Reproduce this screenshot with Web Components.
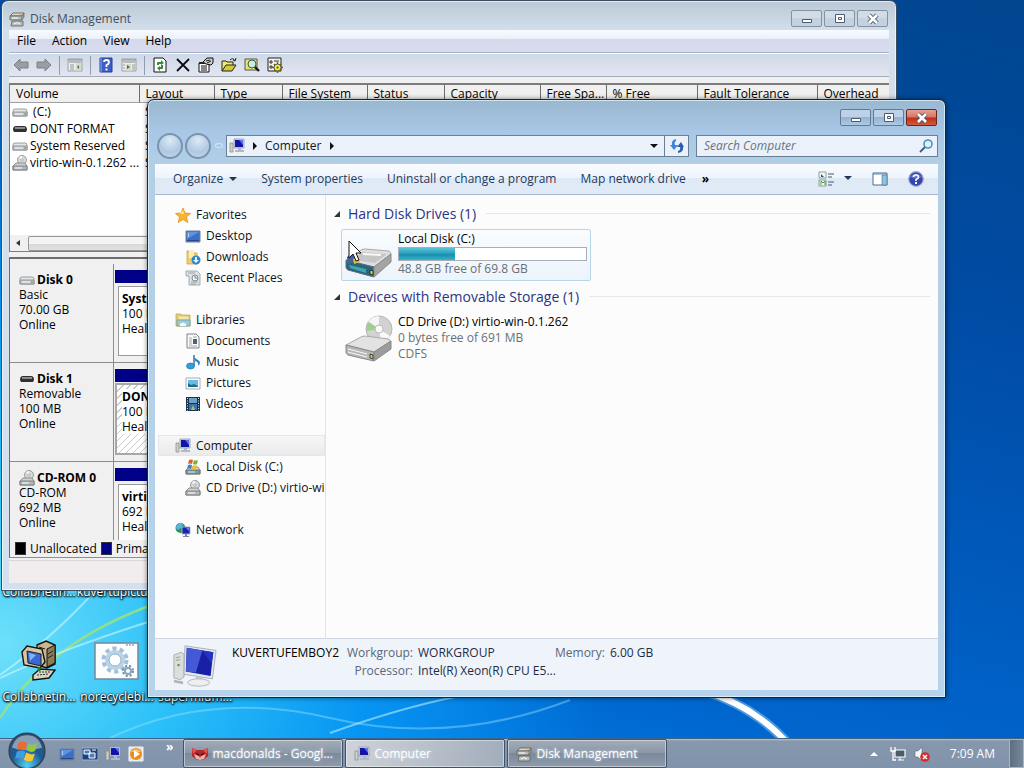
<!DOCTYPE html>
<html lang="en">
<head>
<meta charset="utf-8">
<meta name="viewport" content="width=device-width, initial-scale=1">
<title>Desktop</title>
<style>
    html, body {
        margin: 0;
        height: 100%;
        overflow: hidden;
    }
    body {
        font-family: "Open Sans", "Noto Sans", sans-serif;
        font-size: 12px;
        line-height: 16px;
        color: #101418;
    }
</style>
</head>
<body>
<win-desktop>
    <desktop-icon label="Collabnetin..." icon="oldpc"></desktop-icon>
    <desktop-icon label="kuvertupictu..." icon="gears"></desktop-icon>
    <desktop-icon label=""></desktop-icon>
    <desktop-icon label="Collabnetin..." icon="oldpc"></desktop-icon>
    <desktop-icon label="norecyclebi..." icon="gears"></desktop-icon>
    <desktop-icon label="supermium..." icon="gears"></desktop-icon>

    <win-window slot="windows" id="disks" caption="Disk Management" icon="disks">
        <disk-management></disk-management>
    </win-window>
    <win-window slot="windows" id="explorer" active>
        <explorer-view></explorer-view>
    </win-window>

    <task-bar slot="taskbar">
        <task-button icon="fox" label="macdonalds - Googl..."></task-button>
        <task-button icon="computer" label="Computer" active></task-button>
        <task-button icon="disks" label="Disk Management"></task-button>
    </task-bar>
</win-desktop>

<script>
const icons = {
    disks: `
        <path d="M1 5l3-3h11l-2 3z" fill="#d9d9d2" stroke="#555" stroke-width=".8"/>
        <path d="M1 5h12v4H1zM3 10h11v5H2z" fill="#b9bcb8" stroke="#5d6161" stroke-width=".8"/>
        <path d="M13 5l2-3v4l-2 3" fill="#999" stroke="#666" stroke-width=".7"/>
        <path d="M3 7h6M5 13q3-3 6 0" stroke="#fff" fill="none"/><path d="M10 3h4" stroke="#d6a94c"/>`,
    computer: `
        <path d="M1 5h3v9H1z" fill="#cfd0c8" stroke="#888" stroke-width=".7"/>
        <path d="M5 1h10v9H5z" fill="#cfd6e4" stroke="#8f9bb2" stroke-width=".8"/>
        <path d="M6 2h8v7H6z" fill="#1414a4"/><path d="M10 2h4v5z" fill="#5b73e6"/>
        <path d="M9 10h3v2H9zM6 12h9v2H6z" fill="#b1b8c5"/>`,
    drive: `
        <path d="M1 7q0-2 2-2h10q2 0 2 2v5H1z" fill="#e4e5e6" stroke="#85898c" stroke-width=".8"/>
        <path d="M1 8h14v4H1z" fill="#c3c6c8" stroke="#83878a" stroke-width=".8"/>
        <path d="M3 10h8" stroke="#fafafa"/><path d="M12 10h2" stroke="#5f9a4e"/>`,
    usb: `<path d="M1 9q0-4 3-4h8q3 0 3 4l-1 2H2z" fill="#303030"/><path d="M3 7h10" stroke="#8a8a8a" stroke-width="2"/>`,
    cd: `
        <circle cx="10" cy="5" r="4.5" fill="#d8dadb" stroke="#85898b" stroke-width=".8"/>
        <path d="M10 5 7 2l3-1z" fill="#fff"/><circle cx="10" cy="5" r="1.2" fill="#fff" stroke="#888" stroke-width=".6"/>
        <path d="M1 11l3-3h9l2 3v4H1z" fill="#cfd1d2" stroke="#77797b" stroke-width=".8"/>
        <path d="M1 11h14v4H1z" fill="#b4b7b9" stroke="#6f7375" stroke-width=".8"/><path d="M3 13h7" stroke="#fff"/>`,
    localdisk: `
        <path d="M1 11l3-3h9l2 3v4H1z" fill="#d3d5d6" stroke="#777b7e" stroke-width=".8"/>
        <path d="M1 11h14v4H1z" fill="#7f9a95" stroke="#5f6b6b" stroke-width=".8"/><path d="M3 13h7" stroke="#dce9e6"/>
        <path d="M4 1q2-1 4 0L7 5Q5 4 3 5z" fill="#dd5f2e"/><path d="M9 1q2 1 4 0l-1 4q-2 1-4 0z" fill="#77b338"/>
        <path d="M3 6q2-1 4 0L6 10q-2-1-4 0z" fill="#3f82c5"/><path d="M8 6q2 1 4 0l-1 4q-2 1-4 0z" fill="#f0bc2c"/>`,
    back: `<path d="M1 8l6-6v3h8v6H7v3z" fill="#9a9da1" stroke="#7d8186"/>`,
    forward: `<path d="M15 8L9 2v3H1v6h8v3z" fill="#9a9da1" stroke="#7d8186"/>`,
    tree: `<path d="M1 2h14v12H1z" fill="#e9eef0" stroke="#9aa0a6"/><path d="M1 3h14M2 5h12" stroke="#83898e"/><path d="M3 8h4M3 10h4M3 12h4" stroke="#999"/><path d="M9 6h5v8H9z" fill="#d0dacd"/><path d="M12 8v4L10 10z" fill="#4e704c"/>`,
    pane: `<path d="M1 2h14v12H1z" fill="#e9eef0" stroke="#9aa0a6"/><path d="M1 3h14M2 5h12" stroke="#83898e"/><path d="M11 8h3M11 10h3M11 12h3M2 8h2M2 11h2" stroke="#999"/><path d="M5 7h5v7H5z" fill="#d0dacd"/><path d="M6 8v4l3-2z" fill="#4e704c"/>`,
    book: `<path d="M2 1h12v14H2z" fill="#3d5fc9" stroke="#263f93"/><path d="M3 1v14" stroke="#93a7ea"/><path d="M6 5q0-2 2.5-2T11 5.5Q11 7 8.5 8v2" fill="none" stroke="#fff" stroke-width="1.8"/><path d="M7.5 11.5h2v2h-2z" fill="#fff"/>`,
    refresh: `<path d="M2 1h9l3 3v11H2z" fill="#fff" stroke="#111"/><path d="M5 8V6q0-1 1-1h3V3l3 3-3 2V7H7v1zM11 8v3q0 1-1 1H8v2l-3-3 3-2v1h1V8z" fill="#2d922e"/>`,
    cross: `<path d="M2 2l12 12M14 2L2 14" stroke="#0b0b18" stroke-width="1.8"/>`,
    properties: `<path d="M1 6h10v9H1z" fill="#fff" stroke="#111"/><path d="M3 9h6M3 11h6M3 13h6" stroke="#111"/><path d="M1 5h10v2H1z" fill="#222"/><path d="M5 5l4-4h6v5l-2 2-5-1z" fill="#ccc" stroke="#111"/><path d="M8 4l4-1M9 6l4-2" stroke="#222"/>`,
    open: `<path d="M1 14V4h4l1 1h6v3" fill="#f2e96c" stroke="#222"/><path d="M1 14l4-6h10l-4 6z" fill="#d2c93e" stroke="#222"/><path d="M9 3q3-3 5 1l-2-1M14 4l1-3" stroke="#222" fill="none"/>`,
    find: `<path d="M1 2h12v11H1z" fill="#e6e273" stroke="#555"/><circle cx="8" cy="7" r="4" fill="#c9ece1" stroke="#3f5d3f"/><path d="M11 10l4 4" stroke="#181818" stroke-width="2.4"/>`,
    settings: `<path d="M1 1h13v13H1z" fill="#f2f2ee" stroke="#222"/><path d="M3 4h2v2H3zM3 9h2v2H3z" stroke="#333" fill="none"/><path d="M7 4h5" stroke="#333"/><path d="M10.500 5v11M5 10.500h11M7 7l7 7M14 7l-7 7" stroke="#6d680c" stroke-width="1.500"/><circle cx="10.500" cy="10.500" r="3.500" fill="#f5ee3c" stroke="#555"/><circle cx="10.500" cy="10.500" r="1" fill="#333"/>`,
    star: `<path d="M8 1l2 5 5.5.5-4 3.5 1.300 5.500L8 12.500l-4.800 3L4.500 10l-4-3.500L6 6z" fill="#f9b52c" stroke="#d98a1a" stroke-width=".7"/><path d="M8 3l1 4H5z" fill="#ffe598"/>`,
    desktop: `<path d="M1 3h14v11H1z" fill="#3c6fc4" stroke="#6c7fa0"/><path d="M2 4h12L2 11z" fill="#5e94dd"/><path d="M2 12h12v1H2z" fill="#254787"/><path d="M3 6h1M3 8h1" stroke="#fff"/>`,
    downloads: `<path d="M2 2h6l1 2h3v11H2z" fill="#f0cf6c" stroke="#c39a3a" stroke-width=".7"/><path d="M4 1h5v8H4z" fill="#f9eebc"/><circle cx="11" cy="11" r="4.500" fill="#2e86ce"/><path d="M10 8h2v3h2l-3 3-3-3h2z" fill="#e5f5ff"/>`,
    recent: `<path d="M1 1h11l3 3v11H4V6H1z" fill="#dfe3e6" stroke="#90989e" stroke-width=".8"/><path d="M3 3h7M6 12h7M6 14h5" stroke="#9aa2a8"/><circle cx="10" cy="8" r="3" fill="#f4f8fa" stroke="#7a858d"/><path d="M10 6v2h2" stroke="#556" fill="none" stroke-width=".8"/>`,
    libraries: `<path d="M1 2h5l1 1h8v11H1z" fill="#e9cf78" stroke="#bf9f49" stroke-width=".7"/><path d="M3 4h11v4H3z" fill="#f4e7ab" stroke="#c8ad5f" stroke-width=".5"/><path d="M2 8h13v6H2z" fill="#9dcbd8" stroke="#5c98ac" stroke-width=".7"/><path d="M5 14v-2q3-3 6 0v2z" fill="#f6fbfb"/>`,
    documents: `<path d="M2 1h9l3 3v11H2z" fill="#fafafa" stroke="#6f767c" stroke-width=".9"/><path d="M4 5h3M4 7h3M4 9h3M4 11h3M4 13h8M8 4h4" stroke="#8d979e" stroke-width=".8"/><path d="M8 6h4v5H8z" fill="#52616d"/>`,
    music: `<path d="M9 1q0 3 4 5t0 6q1-4-3-5" fill="#1e86c9"/><path d="M9 1v11" stroke="#2c6fa9" stroke-width="1.400"/><ellipse cx="5.500" cy="12" rx="4" ry="3" fill="#2e9fdd" stroke="#1a6ca5" stroke-width=".6"/>`,
    pictures: `<path d="M1 3h14v11H1z" fill="#fff" stroke="#9aa4ac" stroke-width=".9"/><path d="M3 5h10v7H3z" fill="#66bce4"/><path d="M3 12V8l3 2 3-1 4 2v1z" fill="#1d6f86"/>`,
    videos: `<path d="M1 1h14v14H1z" fill="#1a3348"/><path d="M4 2h8v5H4z" fill="#6ba2c9"/><path d="M4 8h8v6H4z" fill="#3f71af"/><path d="M2.500 2v13M13.500 2v13" stroke="#d7e4ea" stroke-dasharray="1 1.500"/><path d="M6 14l2-5 2 5z" fill="#9bc47b"/>`,
    network: `<circle cx="5.500" cy="6" r="5" fill="#2f8f62"/><path d="M1 5q3-5 7-4l-1 4-4 3q-2-1-2-3" fill="#59b7e4"/><path d="M7 5h8v7H7z" fill="#1a23b0" stroke="#a8b5cc" stroke-width=".9"/><path d="M11 6h3v3z" fill="#6f86e8"/><path d="M10 12h2v2h-2zM8 14h6v1H8z" fill="#7b88a0"/>`,
    magnifier: `<circle cx="10" cy="6" r="4" fill="#dcf1fb" stroke="#4e90bd" stroke-width="1.600"/><path d="M7 9l-5 5" stroke="#4a5f78" stroke-width="2"/>`,
    reload: `<path d="M7 1v2Q5 4 6 7h3l-4 5-4-5h2Q2 2 7 1z" fill="#3d86dc"/><path d="M9 15v-2q3-1 2-4H8l4-5 3 5h-1q1 5-5 6z" fill="#2a5fb0"/>`,
    views: `<path d="M1 1h7v6H1zM1 9h7v6H1z" fill="#f5f9f5" stroke="#6e8b7d" stroke-width=".8"/><path d="M3 3l3 3H3z" fill="#28567b"/><path d="M3 14v-4l2 2 2-2v4" stroke="#4f9a36" fill="none"/><path d="M10 3h6M10 6h4M10 11h6M10 14h4" stroke="#405a78"/>`,
    preview: `<path d="M1 2h14v12H1z" fill="#fff" stroke="#4d6b8a"/><path d="M1 3h14" stroke="#6b89a5"/><path d="M10 4h5v10h-5z" fill="#8ec3de" stroke="#4d6b8a" stroke-width=".6"/>`,
    help: `<circle cx="8" cy="8" r="7.300" fill="#3145b4" stroke="#a6acc4" stroke-width="1.200"/><path d="M2 6q6-7 12 0-6 3-12 0" fill="#6576d0"/><path d="M5.500 6Q5.500 4 8 4t2.500 2.200Q10.500 7.500 8 8.500V10" fill="none" stroke="#fff" stroke-width="1.600"/><path d="M7 11h2v2H7z" fill="#fff"/>`,
    fox: `<path d="M0 2l5 2h6l5-2v8l-5 4H5l-5-4z" fill="#b9252c"/><path d="M0 2l5 2-4 4zM16 2l-5 2 4 4z" fill="#e0564e"/><path d="M2 8l5 2 1 2 1-2 5-2-2 5-4 1-4-1z" fill="#e8b3ac"/><path d="M3 7l4 1v2zM13 7L9 8v2z" fill="#300"/>`,
    switcher: `<path d="M0 2h16v12H0z" fill="#1f4177" stroke="#9ab6da"/><path d="M2 4h6v4H2zM7 7h6v5H7z" fill="#4c7fbd" stroke="#fff"/><path d="M10 4h4" stroke="#fff"/>`,
    player: `<path d="M1 1h14v14H1z" fill="#d9e4ef" stroke="#f3f7fa"/><circle cx="8" cy="8" r="6" fill="#f08c14"/><path d="M3 6q5-6 10 0z" fill="#fbc467"/><path d="M6 4l6 4-6 4z" fill="#fff"/>`,
    lan: `<path d="M5 4h10v7H5z" fill="#4c5c6a" stroke="#fff" stroke-width="1.200"/><path d="M8 14h6M10 11v3" stroke="#fff"/><path d="M1 1v4h4V1M3 5v9h3" stroke="#fff" fill="none" stroke-width="1.300"/>`,
    muted: `<path d="M1 5h3l4-4v14l-4-4H1z" fill="#f4f6f8" stroke="#5c6876" stroke-width=".6"/><circle cx="11" cy="11" r="4.800" fill="#d32c2c"/><path d="M9 9l4 4M13 9l-4 4" stroke="#fff" stroke-width="1.500"/>`
};

const bigIcons = {
    harddisk: `
        <path d="M1 30 16 19q2-1 4-1l24 2q2 1 2 3L29 36z" fill="#dedede" stroke="#aaa"/>
        <path d="M16 21l26 2-12 9-21-3z" fill="#c6c6c6"/><path d="M18 23l18 1" stroke="#f8f8f8" stroke-width="2"/>
        <path d="M1 29l28 7v10L3 39q-2-1-2-3z" fill="#22687f" stroke="#667"/><path d="M4 34l17 4v4L5 37z" fill="#48a3ae"/>
        <path d="M29 36l17-13v8L29 46z" fill="#a4a4a4" stroke="#888"/><path d="M25 39l3 1v4l-3-1z" fill="#c9e044" stroke="#333"/>
        <path d="M2 26q5-5 9-3l-1 8-8 2z" fill="#44649f"/><path d="M8 28l5-3 2 6-6 2z" fill="#e8b836"/>`,
    cddrive: `
        <circle cx="34" cy="15" r="13" fill="#d2d2d2" stroke="#b5b5b5"/>
        <path d="M34 15 23 8q4-6 11-6z" fill="#f5f5f5"/><path d="M34 15 22 17q-1-5 2-9z" fill="#9dcf8e"/>
        <path d="M34 15l11 7q-4 5-9 5z" fill="#f9f9f9"/><circle cx="34" cy="15" r="4" fill="#fafafa" stroke="#bbb"/>
        <path d="M1 31 16 23q2-1 4-1l23 3q2 1 3 2L29 38z" fill="#e2e2e2" stroke="#aaa"/>
        <path d="M1 31l28 7v9L3 41q-2-1-2-3z" fill="#b7b7b7" stroke="#888"/><path d="M3 35l19 5M3 38l19 5" stroke="#f8f8f8"/>
        <path d="M29 38l17-11v8L29 47z" fill="#9c9c9c" stroke="#888"/><path d="M25 40l3 1v4l-3-1z" fill="#b3d54a" stroke="#444"/>`,
    bigpc: `
        <path d="M1 12l8-3 3 2v25l-4 3-7-2z" fill="#dcdedb" stroke="#aaa"/><path d="M3 15l5-1M3 18l5-1" stroke="#999"/><circle cx="6" cy="23" r="1.500" fill="#65a142"/>
        <path d="M13 2l34 5-4 31-31-5z" fill="#e4e8ee" stroke="#a4adba"/>
        <path d="M15 4l29 5-3 26-27-5z" fill="#1720a6"/><path d="M15 4l17 3-7 24-11-1z" fill="#4558d6"/><path d="M32 7l12 2-2 12z" fill="#2534c0"/>
        <path d="M25 36l7 1v4h-7z" fill="#b8bdc5"/><ellipse cx="28" cy="42" rx="12" ry="4" fill="#eceef0" stroke="#b0b4ba"/>
        <path d="M1 39l10 2v3L1 42z" fill="#b3b6b9"/>`,
    oldpc: `
        <path d="M22 8l9-4 9 4v19l-8 4-10-3z" fill="#c8b88f" stroke="#111" stroke-width="1.400"/><path d="M32 12v18l8-4V8z" fill="#8d7d56" stroke="#111"/><path d="M24 10l6 2M33 17l5-3M33 21l5-3" stroke="#222"/>
        <path d="M7 15l5-6 15 3 3 13-5 6-16-3z" fill="#d8c79e" stroke="#111" stroke-width="1.400"/>
        <path d="M12 14l14 3v12l-13-3z" fill="#3867d8" stroke="#222"/><path d="M14 16l7 2-6 6z" fill="#84b4f6"/>
        <path d="M18 38l7-6 15 1-6 8-16 2z" fill="#d9d7c2" stroke="#111" stroke-width="1.400"/><path d="M22 38l12-1M24 35l11 0" stroke="#333" stroke-dasharray="2 1"/><path d="M24 30v4" stroke="#297832" stroke-width="3"/>`,
    gears: `
        <path d="M2 6h43v36H2z" fill="#fbfcfd" stroke="#74899a" stroke-width="1.500"/><path d="M33 8h8" stroke="#778" stroke-dasharray="2 1"/>
        <circle cx="22" cy="23" r="11" fill="none" stroke="#a3c0da" stroke-width="5" stroke-dasharray="4 3"/>
        <circle cx="22" cy="23" r="8" fill="#fff" stroke="#b9d3e8" stroke-width="4"/><circle cx="22" cy="23" r="6" fill="#fff" stroke="#8fb0cd"/>
        <circle cx="35" cy="34" r="5" fill="none" stroke="#6e8ba5" stroke-width="2" stroke-dasharray="2 2"/><circle cx="35" cy="34" r="3" fill="#fff" stroke="#8aa5bd" stroke-width="2"/>`,
    orb: `
        <defs><radialGradient id="g" cx=".5" cy=".9" r=".9"><stop offset="0" stop-color="#55d0ef"/><stop offset=".5" stop-color="#1c5c96"/><stop offset="1" stop-color="#37506d"/></radialGradient></defs>
        <circle cx="24" cy="24" r="22.500" fill="url(#g)" stroke="#324357" stroke-width="2"/>
        <path d="M5 20Q9 4 24 4t19 16q-19 6-38 0z" fill="#e0eaf2" opacity=".5"/>
        <path d="M13 14q6-4 11 0l-2 9q-5-3-11 0z" fill="#ef6a2c"/><path d="M26 15q5 3 11-1l-3 10q-5 3-10-1z" fill="#8fcb3c"/>
        <path d="M11 25q6-3 11 0l-3 10q-5-4-10-1z" fill="#3f9de0"/><path d="M23 26q6 4 11 1l-3 9q-5 3-11-1z" fill="#fbc62f"/>`
};

class WinIcon extends HTMLElement {
    constructor() {
        super();
        this.attachShadow({mode: 'open'});
    }

    connectedCallback() {
        const name = this.getAttribute('name');
        const big = name in bigIcons;
        const size = big ? 48 : 16;
        this.shadowRoot.innerHTML = `
            <style>
                :host {
                    display: inline-block;
                    flex: none;
                    width: var(--icon-size, ${size}px);
                    height: var(--icon-size, ${size}px);
                }
                svg {
                    display: block;
                    width: 100%;
                    height: 100%;
                }
            </style>
            <svg viewBox="0 0 ${size} ${size}" aria-hidden="true" fill="none">${big ? bigIcons[name] : icons[name] || ''}</svg>
        `;
    }
}

class WinDesktop extends HTMLElement {
    constructor() {
        super();
        this.attachShadow({mode: 'open'});
        this.shadowRoot.innerHTML = `
            <style>
                :host {
                    display: flex;
                    flex-direction: column;
                    position: relative;
                    height: 100vh;
                    overflow: hidden;
                    background:
                        radial-gradient(ellipse 600px 560px at 0% 84%, #6fe0fa 0%, #2bc0f8 30%, rgba(8, 156, 248, .8) 62%, transparent 100%),
                        linear-gradient(195deg, #01468f 0%, #004ba4 30%, #0065cd 75%, #0088f0 100%);
                }
                #wallpaper {
                    position: absolute;
                    inset: 0;
                    width: 100%;
                    height: 100%;
                }
                #icons {
                    flex: 1;
                    display: grid;
                    grid-template-columns: repeat(3, 78px);
                    grid-auto-rows: 105px;
                    align-content: end;
                    position: relative;
                    margin-bottom: -4px;
                }
                ::slotted([slot='windows']) {
                    position: absolute;
                }
                ::slotted(#disks) {
                    inset: 0 127px 177px 1px;
                }
                ::slotted(#explorer) {
                    inset: 99px 78px 70px 147px;
                }
            </style>
            <svg id="wallpaper" viewBox="0 0 1024 768" preserveAspectRatio="none" fill="none" aria-hidden="true">
                <path d="M0 718Q50 640 160 602" stroke="#9be37b" stroke-width="2.500" opacity=".85"/>
                <path d="M0 678Q60 650 148 622M0 675Q50 640 95 591" stroke="#c8f6ff" stroke-width="2" opacity=".6"/>
                <path d="M110 738Q210 690 330 718T570 700" stroke="#a3e8ff" stroke-width="2" opacity=".4"/>
                <path d="M330 733Q400 708 455 697" stroke="#b6ecff" stroke-width="2" opacity=".6"/>
                <path d="M700 690Q755 705 792 748" stroke="#bfe6ff" stroke-width="10" opacity=".4"/>
                <path d="M700 690Q755 705 792 748" stroke="#fff" stroke-width="6"/>
            </svg>
            <div id="icons"><slot></slot></div>
            <slot name="windows"></slot>
            <slot name="taskbar"></slot>
        `;
    }
}

class DesktopIcon extends HTMLElement {
    constructor() {
        super();
        this.attachShadow({mode: 'open'});
    }

    connectedCallback() {
        this.shadowRoot.innerHTML = `
            <style>
                :host {
                    display: flex;
                    flex-direction: column;
                    align-items: center;
                    gap: 4px;
                    color: white;
                    white-space: nowrap;
                    text-shadow: 0 1px 2px #000, 1px 1px 2px #000, 0 0 2px #000;
                }
                win-icon { min-height: 48px; }
            </style>
            <win-icon name="${this.getAttribute('icon')}"></win-icon>
            <span>${this.getAttribute('label')}</span>
        `;
    }
}

class WinWindow extends HTMLElement {
    constructor() {
        super();
        this.attachShadow({mode: 'open'});
    }

    connectedCallback() {
        const caption = this.getAttribute('caption');
        this.shadowRoot.innerHTML = `
            <style>
                :host {
                    display: flex;
                    flex-direction: column;
                    box-sizing: border-box;
                    padding: 0 7px 7px;
                    border: 1px solid #3c4d60;
                    border-radius: 7px 7px 0 0;
                    background: linear-gradient(#bcc8d5, #d3dfea 30px, #d3e0ee);
                    box-shadow: inset 0 0 0 1px rgba(255, 255, 255, .6);
                }
                :host([active]) {
                    border-color: #182838;
                    background: linear-gradient(#9ab7d0 0, #a9c7e6 32px, #b2cfe6 64px, #b7d3ec 100%);
                    box-shadow: inset 0 0 0 1px rgba(225, 245, 255, .75), 0 0 5px rgba(0, 0, 0, .5);
                }
                header {
                    display: flex;
                    align-items: flex-start;
                    height: 29px;
                }
                h1 {
                    display: flex;
                    align-items: center;
                    gap: 5px;
                    flex: 1;
                    margin: 10px 0 0;
                    font: inherit;
                    color: #42505e;
                }
                #buttons {
                    display: flex;
                    gap: 2px;
                    margin-top: 9px;
                    padding-right: 1px;
                }
                button {
                    display: flex;
                    align-items: center;
                    justify-content: center;
                    width: 31px;
                    height: 17px;
                    padding: 0;
                    border: 1px solid #8292a4;
                    border-radius: 2px;
                    background: linear-gradient(#d2dce7 50%, #c5d1de 50%);
                }
                :host([active]) button {
                    border-color: #5f7b98;
                    background: linear-gradient(#bdd2e8 50%, #96b3d0 50%, #acc9e5);
                }
                :host([active]) .close {
                    border-color: #6b2620;
                    background: linear-gradient(#e5a193 0%, #d97563 48%, #bf2e17 52%, #d6593b);
                }
                svg {
                    width: 14px;
                    height: 12px;
                }
                main {
                    flex: 1;
                    display: flex;
                    min-height: 0;
                }
            </style>
            <header>
                <h1>${caption ? `<win-icon name="${this.getAttribute('icon')}"></win-icon>${caption}` : ''}</h1>
                <div id="buttons">
                    <button aria-label="Minimize"><svg viewBox="0 0 14 12"><path d="M2.500 6.500h9v3h-9z" fill="#fff" stroke="#4b5c70"/></svg></button>
                    <button aria-label="Maximize"><svg viewBox="0 0 14 12"><path d="M2.500 1.500h9v8h-9zM5.500 4.500h3v2h-3z" fill="#fff" stroke="#4b5c70"/></svg></button>
                    <button class="close" aria-label="Close"><svg viewBox="0 0 14 12" fill="none"><path d="M3 2l8 8M11 2l-8 8" stroke="#47566a" stroke-width="4.500"/><path d="M3 2l8 8M11 2l-8 8" stroke="#fff" stroke-width="2.600"/></svg></button>
                </div>
            </header>
            <main><slot></slot></main>
        `;
    }
}

class DiskManagement extends HTMLElement {
    constructor() {
        super();
        this.attachShadow({mode: 'open'});
        const tools = ['back', 'forward', '', 'tree', '', 'book', 'pane', '', 'refresh', 'cross', 'properties', 'open', 'find', 'settings'];
        const columns = [['Volume', 129], ['Layout', 75], ['Type', 68], ['File System', 85], ['Status', 77], ['Capacity', 96], ['Free Spa...', 66], ['% Free', 91], ['Fault Tolerance', 120], ['Overhead']];
        const volumes = [['drive', '&nbsp;(C:)'], ['usb', 'DONT FORMAT'], ['drive', 'System Reserved'], ['cd', 'virtio-win-0.1.262 ...']];
        this.shadowRoot.innerHTML = `
            <style>
                :host {
                    flex: 1;
                    display: flex;
                    flex-direction: column;
                    min-width: 0;
                    background: #f0f0f0;
                    color: #000;
                }
                nav {
                    display: flex;
                    align-items: center;
                    height: 22px;
                    border-bottom: 1px solid #a5b3ca;
                    background: linear-gradient(#f8fbff 0, #e9f0fa 9px, #d3d8eb 9px, #d8dcee);
                }
                button {
                    padding: 0;
                    border: 0;
                    background: none;
                    font: inherit;
                    color: inherit;
                }
                nav button { padding: 0 8px; }
                #tools {
                    display: flex;
                    align-items: center;
                    gap: 7px;
                    height: 22px;
                    padding: 0 4px;
                    border-top: 1px solid white;
                    border-bottom: 1px solid #a3acba;
                    background: linear-gradient(#cfd9e7, #e2e6f1);
                }
                #tools button { height: 16px; }
                #tools i {
                    width: 1px;
                    height: 19px;
                    background: #8f9bb0;
                }
                #volumes {
                    display: flex;
                    flex-direction: column;
                    height: 166px;
                    margin-top: 6px;
                    border: 1px solid #7a7d80;
                    border-width: 2px 0 1px 1px;
                    background: white;
                }
                table {
                    width: 100%;
                    border-collapse: collapse;
                    table-layout: fixed;
                }
                th, td {
                    padding: 0 0 0 6px;
                    font-weight: normal;
                    text-align: left;
                    white-space: nowrap;
                    overflow: hidden;
                }
                th {
                    height: 17px;
                    border-right: 1px solid #6d6d6d;
                    border-bottom: 1px solid #a0a0a0;
                    background: #f1f0ee;
                }
                th:last-child { border-right: 0; }
                td { height: 17px; }
                td:first-child { padding-left: 2px; }
                td div {
                    display: flex;
                    align-items: center;
                    gap: 2px;
                }
                #scroll {
                    display: flex;
                    align-items: center;
                    gap: 5px;
                    height: 16px;
                    margin-top: auto;
                    padding-left: 6px;
                    background: #f0f0f0;
                }
                #scroll::before {
                    content: "";
                    border: 3px solid transparent;
                    border-right: 4px solid #333;
                    border-left: 0;
                }
                #scroll div {
                    flex: 1;
                    height: 13px;
                    margin-left: 3px;
                    border: 1px solid #979797;
                    border-radius: 2px;
                    background: linear-gradient(#f4f4f4 50%, #d8d8d8 50%, #e2e2e2);
                }
                #disks {
                    flex: 1;
                    min-height: 0;
                    margin-top: 5px;
                    overflow: hidden;
                    border: 1px solid #6d6d6d;
                    border-width: 2px 0 0 1px;
                    padding-top: 5px;
                }
                .disk {
                    display: grid;
                    grid-template-columns: 104px 1fr;
                    height: 98px;
                    border-bottom: 1px solid #8c8c8c;
                    line-height: 15px;
                }
                .label {
                    padding: 8px 0 0 9px;
                    border-right: 1px solid #8c8c8c;
                }
                .label b {
                    display: flex;
                    align-items: center;
                    gap: 2px;
                    height: 15px;
                }
                .parts { padding: 6px 0 6px 1px; }
                .bar {
                    height: 13px;
                    background: #000087;
                }
                .part {
                    height: 60px;
                    margin: 3px 0 0 3px;
                    padding: 4px 3px;
                    border: 1px solid #9a9a9a;
                    background: white;
                    white-space: nowrap;
                }
                .part b, .part span { display: block; }
                .hatched {
                    border: 2px solid #a8a8a8;
                    margin: 1px 0 0 0;
                    padding-left: 5px;
                    background: repeating-linear-gradient(135deg, #fff 0 4px, #c9c9c9 4px 5px);
                }
                .hatched b, .hatched span { background: white; }
                #legend {
                    display: flex;
                    align-items: center;
                    gap: 4px;
                    height: 17px;
                    padding: 0 5px;
                    border-left: 1px solid #6d6d6d;
                    border-bottom: 1px solid #8c8c8c;
                }
                #legend i {
                    width: 9px;
                    height: 11px;
                    border: 1px solid #333;
                    background: black;
                }
                #legend i.primary { background: #000087; }
                footer {
                    height: 22px;
                    margin-top: 2px;
                    border-top: 1px solid #d7d7d7;
                    background: #f1edee;
                }
            </style>
            <nav><button>File</button><button>Action</button><button>View</button><button>Help</button></nav>
            <div id="tools">${tools.map(t => t ? `<button aria-label="${t}"><win-icon name="${t}"></win-icon></button>` : '<i></i>').join('')}</div>
            <div id="volumes">
                <table>
                    <colgroup>${columns.map(c => `<col${c[1] ? ` style="width: ${c[1]}px"` : ''}>`).join('')}</colgroup>
                    <thead><tr>${columns.map(c => `<th>${c[0]}</th>`).join('')}</tr></thead>
                    <tbody>${volumes.map(v => `<tr><td><div><win-icon name="${v[0]}"></win-icon>${v[1]}</div></td><td>Simple</td></tr>`).join('')}</tbody>
                </table>
                <div id="scroll"><div></div></div>
            </div>
            <div id="disks">
                <div class="disk">
                    <div class="label"><b><win-icon name="drive"></win-icon>Disk 0</b>Basic<br>70.00 GB<br>Online</div>
                    <div class="parts"><div class="bar"></div><div class="part"><b>System Reserved</b><span>100 MB NTFS</span><span>Healthy</span></div></div>
                </div>
                <div class="disk">
                    <div class="label"><b><win-icon name="usb"></win-icon>Disk 1</b>Removable<br>100 MB<br>Online</div>
                    <div class="parts"><div class="bar"></div><div class="part hatched"><b>DONT FORMAT</b><span>100 MB</span><span>Healthy</span></div></div>
                </div>
                <div class="disk">
                    <div class="label"><b><win-icon name="cd"></win-icon>CD-ROM 0</b>CD-ROM<br>692 MB<br>Online</div>
                    <div class="parts"><div class="bar"></div><div class="part"><b>virtio-win-0.1.262</b><span>692 MB CDFS</span><span>Healthy</span></div></div>
                </div>
            </div>
            <div id="legend"><i></i>Unallocated<i class="primary"></i>Primary partition</div>
            <footer></footer>
        `;
    }
}

class ExplorerView extends HTMLElement {
    constructor() {
        super();
        this.attachShadow({mode: 'open'});
        const groups = [
            ['star', 'Favorites', [['desktop', 'Desktop'], ['downloads', 'Downloads'], ['recent', 'Recent Places']]],
            ['libraries', 'Libraries', [['documents', 'Documents'], ['music', 'Music'], ['pictures', 'Pictures'], ['videos', 'Videos']]],
            ['computer', 'Computer', [['localdisk', 'Local Disk (C:)'], ['cd', 'CD Drive (D:) virtio-win-0.1.262']]],
            ['network', 'Network', []]
        ];
        const link = (icon, text, cls) => `<a href="#" class="${cls}"><win-icon name="${icon}"></win-icon>${text}</a>`;
        this.shadowRoot.innerHTML = `
            <style>
                :host {
                    flex: 1;
                    display: flex;
                    flex-direction: column;
                    min-width: 0;
                }
                button {
                    padding: 0;
                    border: 0;
                    background: none;
                    font: inherit;
                    color: inherit;
                    white-space: nowrap;
                }
                #nav {
                    display: flex;
                    align-items: center;
                    height: 21px;
                    padding: 6px 0 8px 2px;
                }
                .round {
                    width: 26px;
                    height: 26px;
                    margin-right: 2px;
                    border: 2px solid #7b94ae;
                    border-radius: 50%;
                    background: radial-gradient(circle at 50% 25%, #dce9f5, #afc9e1 60%, #c4dcef);
                }
                .chevron {
                    width: 8px;
                    height: 5px;
                    margin: 0 3px 0 2px;
                    border: 1px solid #d3e6f8;
                    border-radius: 50%;
                    box-sizing: border-box;
                }
                #address, #search {
                    display: flex;
                    align-items: center;
                    box-sizing: border-box;
                    height: 22px;
                    border: 1px solid #6a7f95;
                    background: #eaf1fa;
                }
                #address {
                    flex: 1;
                    padding-left: 2px;
                    margin-right: 7px;
                }
                #address span {
                    flex: 1;
                    display: flex;
                    align-items: center;
                    gap: 8px;
                    color: #10141c;
                }
                #address button {
                    display: flex;
                    align-items: center;
                    justify-content: center;
                    width: 24px;
                    height: 20px;
                    border-left: 1px solid #6a7f95;
                }
                #address .drop { width: 20px; border: 0; }
                .right {
                    border: 4px solid transparent;
                    border-left-color: #111;
                    border-right: 0;
                }
                .down {
                    display: inline-block;
                    border: 4px solid transparent;
                    border-top-color: #111;
                    border-bottom: 0;
                }
                #search {
                    width: 242px;
                    padding: 0 3px 0 7px;
                }
                input {
                    flex: 1;
                    min-width: 0;
                    padding: 0;
                    border: 0;
                    background: none;
                    font: inherit;
                    font-style: italic;
                }
                input::placeholder { color: #6b7178; }
                #commands {
                    display: flex;
                    align-items: center;
                    gap: 24px;
                    height: 30px;
                    padding: 0 14px 0 18px;
                    border-bottom: 1px solid #a9b6c9;
                    background: linear-gradient(#f9fcff 0, #edf4fc 14px, #dfe9f6 14px, #e1ebf7);
                    color: #1e395b;
                }
                #commands .down { margin: 0 0 2px 6px; border-top-color: #1e395b; }
                #commands .more { margin-left: -8px; color: #000; font-weight: bold; }
                #commands .views { margin-left: auto; }
                #commands .views, #commands .preview, #commands .help {
                    display: flex;
                    align-items: center;
                    gap: 4px;
                }
                #commands .preview { margin: 0 -4px; }
                #body {
                    flex: 1;
                    display: grid;
                    grid-template-columns: 171px 1fr;
                    min-height: 0;
                    background: #fcfcfd;
                }
                #tree {
                    padding: 9px 0 0 3px;
                    border-right: 1px solid #dfe5ef;
                    overflow: hidden;
                }
                #tree section { margin-bottom: 21px; }
                #tree a {
                    display: flex;
                    align-items: center;
                    gap: 5px;
                    height: 21px;
                    padding-left: 17px;
                    color: #101418;
                    text-decoration: none;
                    white-space: nowrap;
                }
                #tree a.child { padding-left: 27px; }
                #tree a.selected {
                    background: linear-gradient(#f7f7f8, #e9eaec);
                    box-shadow: inset 0 0 0 1px #e6e7ea;
                }
                #files {
                    display: flex;
                    flex-direction: column;
                    gap: 5px;
                    padding: 8px 8px 0;
                }
                h2 {
                    display: flex;
                    align-items: center;
                    height: 21px;
                    margin: 0;
                    font-size: 14px;
                    font-weight: normal;
                    color: #2b3482;
                }
                h2::before {
                    content: "";
                    margin-right: 8px;
                    border-left: 6px solid transparent;
                    border-bottom: 6px solid #333;
                }
                h2::after {
                    content: "";
                    flex: 1;
                    height: 1px;
                    margin-left: 10px;
                    background: #e5e7ee;
                }
                .tile {
                    display: flex;
                    gap: 5px;
                    width: 241px;
                    height: 49px;
                    margin-left: 7px;
                    padding: 1px 4px 0 3px;
                    border: 1px solid transparent;
                    border-radius: 2px;
                    color: #6b7075;
                }
                .tile.hover {
                    border-color: #b8d6ea;
                    background: linear-gradient(#fafcfe, #ecf4fc);
                }
                .tile div { flex: 1; }
                .tile b, .tile span {
                    display: block;
                    font-weight: normal;
                }
                .tile b { color: #000; }
                .meter {
                    box-sizing: border-box;
                    width: 189px;
                    height: 14px;
                    border: 1px solid #a5b0b8;
                    background: linear-gradient(90deg, transparent 30%, #fff 30%), linear-gradient(#5fc3d8, #1f9dbb 50%, #188ba9 50%, #35b3cb);
                }
                .pointer {
                    position: absolute;
                    width: 14px;
                    height: 22px;
                    margin: 9px 0 0 3px;
                }
                #details {
                    --icon-size: 44px;
                    display: flex;
                    gap: 15px;
                    box-sizing: border-box;
                    height: 52px;
                    padding: 5px 18px;
                    border-top: 1px solid #cfd6e0;
                    background: #eff4fa;
                    color: #1e2c48;
                }
                #info {
                    display: flex;
                    gap: 8px;
                    line-height: 18px;
                    white-space: nowrap;
                }
                #info strong {
                    font-weight: normal;
                    color: #000;
                }
                dl {
                    display: grid;
                    grid-template-columns: auto 132px auto auto;
                    column-gap: 5px;
                    align-content: start;
                    margin: 0;
                }
                dt {
                    text-align: right;
                    color: #5a6779;
                }
                dd { margin: 0; }
            </style>
            <div id="nav">
                <button class="round" aria-label="Back"></button>
                <button class="round" aria-label="Forward"></button>
                <div class="chevron"></div>
                <div id="address">
                    <span><win-icon name="computer"></win-icon><i class="right"></i>Computer<i class="right"></i></span>
                    <button class="drop" aria-label="Previous locations"><i class="down"></i></button>
                    <button aria-label="Refresh"><win-icon name="reload"></win-icon></button>
                </div>
                <div id="search"><input type="text" placeholder="Search Computer" aria-label="Search Computer"><win-icon name="magnifier"></win-icon></div>
            </div>
            <div id="commands">
                <button>Organize<i class="down"></i></button>
                <button>System properties</button>
                <button>Uninstall or change a program</button>
                <button>Map network drive</button>
                <button class="more" aria-label="More commands">»</button>
                <button class="views" aria-label="Views"><win-icon name="views"></win-icon><i class="down"></i></button>
                <button class="preview" aria-label="Preview pane"><win-icon name="preview"></win-icon></button>
                <button class="help" aria-label="Help"><win-icon name="help"></win-icon></button>
            </div>
            <div id="body">
                <div id="tree">${groups.map(g => `
                    <section>${link(g[0], g[1], g[1] === 'Computer' ? 'selected' : '')}${g[2].map(c => link(c[0], c[1], 'child')).join('')}</section>`).join('')}
                </div>
                <div id="files">
                    <h2>Hard Disk Drives (1)</h2>
                    <div class="tile hover">
                        <svg class="pointer" viewBox="0 0 14 22"><path d="M1 1v17l4-4 3 7 3-1-3-7h5z" fill="#fff" stroke="#111"/></svg>
                        <win-icon name="harddisk"></win-icon>
                        <div><b>Local Disk (C:)</b><div class="meter" role="img" aria-label="Space used"></div><span>48.8 GB free of 69.8 GB</span></div>
                    </div>
                    <h2>Devices with Removable Storage (1)</h2>
                    <div class="tile">
                        <win-icon name="cddrive"></win-icon>
                        <div><b>CD Drive (D:) virtio-win-0.1.262</b><span>0 bytes free of 691 MB</span><span>CDFS</span></div>
                    </div>
                </div>
            </div>
            <div id="details">
                <win-icon name="bigpc"></win-icon>
                <div id="info">
                    <strong>KUVERTUFEMBOY2</strong>
                    <dl>
                        <dt>Workgroup:</dt><dd>WORKGROUP</dd><dt>Memory:</dt><dd>6.00 GB</dd>
                        <dt>Processor:</dt><dd>Intel(R) Xeon(R) CPU E5...</dd>
                    </dl>
                </div>
            </div>
        `;
    }
}

class TaskButton extends HTMLElement {
    constructor() {
        super();
        this.attachShadow({mode: 'open'});
    }

    connectedCallback() {
        this.shadowRoot.innerHTML = `
            <style>
                :host { display: block; width: 160px; }
                button {
                    display: flex;
                    align-items: center;
                    gap: 4px;
                    width: 100%;
                    height: 29px;
                    padding: 0 0 0 8px;
                    border: 1px solid #42526a;
                    border-radius: 2px;
                    background: linear-gradient(#a3adb9, #8996a6 50%, #7b899b 50%, #8d9bad);
                    box-shadow: inset 0 0 0 1px rgba(255, 255, 255, .45);
                    font: inherit;
                    color: white;
                    text-shadow: 0 0 3px #dfe7ef;
                    white-space: nowrap;
                }
                :host([active]) button {
                    background: linear-gradient(100deg, #cfd3d9, #b8c0ca 50%, #a2adbb);
                }
            </style>
            <button><win-icon name="${this.getAttribute('icon')}"></win-icon>${this.getAttribute('label')}</button>
        `;
    }
}

class TaskBar extends HTMLElement {
    constructor() {
        super();
        this.attachShadow({mode: 'open'});
        this.shadowRoot.innerHTML = `
            <style>
                :host {
                    display: flex;
                    align-items: center;
                    height: 29px;
                    position: relative;
                    border-top: 1px solid #3f6488;
                    background: linear-gradient(#b5c6d6 0, #8798ad 2px, #8093aa);
                    color: white;
                }
                button {
                    padding: 0;
                    border: 0;
                    background: none;
                    font: inherit;
                    color: inherit;
                }
                #start {
                    --icon-size: 38px;
                    height: 38px;
                    margin: -5px 13px 0 8px;
                }
                #quick {
                    display: flex;
                    gap: 7px;
                }
                #quick button { height: 16px; }
                #more {
                    align-self: flex-start;
                    margin: 0 10px 0 22px;
                    font-weight: bold;
                }
                #tasks {
                    display: flex;
                    gap: 2px;
                    flex: 1;
                }
                #tray {
                    display: flex;
                    align-items: center;
                    gap: 8px;
                }
                #tray button { height: 16px; }
                .up {
                    margin-right: 4px;
                    border: 4px solid transparent;
                    border-bottom-color: white;
                    border-top: 0;
                }
                time { margin: 0 14px 0 12px; }
                #show {
                    width: 15px;
                    height: 29px;
                    border: 1px solid #a8b5c3;
                    background: linear-gradient(90deg, #5d6e82, #78889b);
                }
            </style>
            <button id="start" aria-label="Start"><win-icon name="orb"></win-icon></button>
            <div id="quick">
                <button aria-label="Show desktop"><win-icon name="desktop"></win-icon></button>
                <button aria-label="Switch windows"><win-icon name="switcher"></win-icon></button>
                <button aria-label="Computer"><win-icon name="computer"></win-icon></button>
                <button aria-label="Media player"><win-icon name="player"></win-icon></button>
            </div>
            <button id="more" aria-label="More">»</button>
            <div id="tasks"><slot></slot></div>
            <div id="tray">
                <i class="up"></i>
                <button aria-label="Network"><win-icon name="lan"></win-icon></button>
                <button aria-label="Volume"><win-icon name="muted"></win-icon></button>
                <time>7:09 AM</time>
            </div>
            <button id="show" aria-label="Peek"></button>
        `;
    }
}

customElements.define('win-icon', WinIcon);
customElements.define('win-desktop', WinDesktop);
customElements.define('desktop-icon', DesktopIcon);
customElements.define('win-window', WinWindow);
customElements.define('disk-management', DiskManagement);
customElements.define('explorer-view', ExplorerView);
customElements.define('task-button', TaskButton);
customElements.define('task-bar', TaskBar);
</script>
</body>
</html>
